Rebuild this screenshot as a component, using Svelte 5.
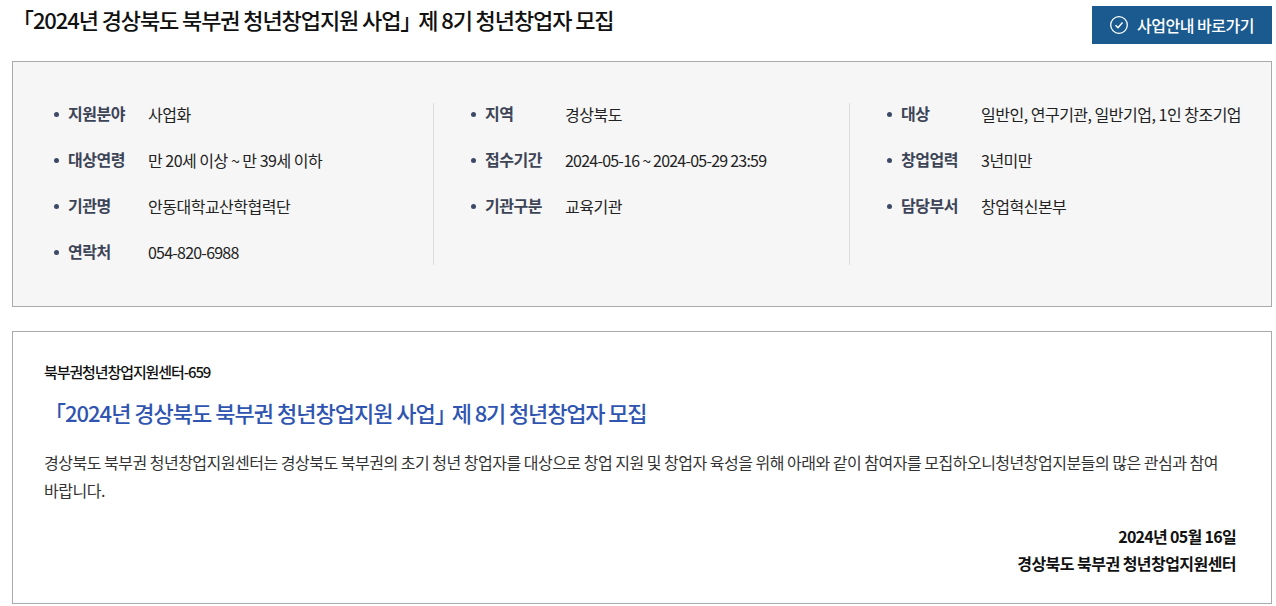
<script>
  const columns = [
    [
      ['지원분야', '사업화'],
      ['대상연령', '만 20세 이상 ~ 만 39세 이하'],
      ['기관명', '안동대학교산학협력단'],
      ['연락처', '054-820-6988']
    ],
    [
      ['지역', '경상북도'],
      ['접수기간', '2024-05-16 ~ 2024-05-29 23:59'],
      ['기관구분', '교육기관']
    ],
    [
      ['대상', '일반인, 연구기관, 일반기업, 1인 창조기업'],
      ['창업업력', '3년미만'],
      ['담당부서', '창업혁신본부']
    ]
  ];

  // values made of digits only run tighter
  const isNumeric = (v) => /^[\d\s:~-]+$/.test(v);
</script>

<main>
  <header>
    <h1>「2024년 경상북도 북부권 청년창업지원 사업」<span class="rest"> 제 8기 청년창업자 모집</span></h1>
    <button type="button">
      <svg width="18" height="18" viewBox="0 0 18 18" fill="none" stroke="#fff" stroke-width="1.3">
        <circle cx="9" cy="9" r="8.3" />
        <path d="M5.5 9.2 8 11.7 12.5 6.6" stroke-width="1.5" />
      </svg>
      사업안내 바로가기
    </button>
  </header>

  <section class="info">
    {#each columns as col}
      <ul>
        {#each col as [label, value]}
          <li>
            <span class="label">{label}</span>
            <span class="value" class:numeric={isNumeric(value)}>{value}</span>
          </li>
        {/each}
      </ul>
    {/each}
  </section>

  <section class="body">
    <p class="code">북부권청년창업지원센터-659</p>
    <h2>「2024년 경상북도 북부권 청년창업지원 사업」<span class="rest"> 제 8기 청년창업자 모집</span></h2>
    <p class="text">경상북도 북부권 청년창업지원센터는 경상북도 북부권의 초기 청년 창업자를 대상으로 창업 지원 및 창업자 육성을 위해 아래와 같이 참여자를 모집하오니청년창업지분들의 많은 관심과 참여 바랍니다.</p>
    <p class="sign"><span class="date">2024년 05월 16일</span><br />경상북도 북부권 청년창업지원센터</p>
  </section>
</main>

<style>
  :global(body) {
    background: #fff;
  }

  main {
    width: 1260px;
    margin-left: 12px;
    font-family: "Noto Sans CJK KR", "Noto Sans", sans-serif;
    color: #222;
  }

  header {
    display: flex;
    justify-content: space-between;
    align-items: flex-start;
    height: 61px;
  }

  h1 {
    margin: 0;
    padding-top: 2px;
    font-size: 22px;
    line-height: 34px;
    font-weight: 500;
    letter-spacing: -1.1px;
    color: #111;
  }

  h1 .rest {
    margin-left: -3px;
  }

  button {
    display: flex;
    align-items: center;
    justify-content: center;
    gap: 9px;
    width: 180px;
    height: 38px;
    margin-top: 6px;
    border: none;
    background: #1a5a8e;
    color: #fff;
    font: 500 16px "Noto Sans CJK KR", sans-serif;
    letter-spacing: -0.5px;
  }

  .info {
    display: grid;
    grid-template-columns: 420px 416px 1fr;
    height: 246px;
    padding: 41px 0;
    box-sizing: border-box;
    border: 1px solid #aaa;
    background: #f6f6f6;
  }

  ul {
    list-style: none;
    margin: 0;
    padding: 0 0 0 36px;
    height: 162px;
    border-left: 1px solid #ddd;
  }

  ul:first-child {
    padding-left: 40px;
    border-left: none;
  }

  li {
    display: flex;
    align-items: center;
    height: 23px;
    margin-bottom: 23px;
    font-size: 16px;
    letter-spacing: -0.5px;
    position: relative;
    padding-left: 15px;
  }

  li::before {
    content: "";
    position: absolute;
    left: 1px;
    top: 9px;
    width: 5px;
    height: 5px;
    border-radius: 50%;
    background: #3c4a66;
  }

  .label {
    width: 80px;
    flex: none;
    font-weight: 700;
    color: #3c4456;
    position: relative;
    top: -2px;
  }

  .value {
    color: #222;
    position: relative;
    top: -1px;
  }

  .value.numeric {
    letter-spacing: -0.78px;
  }

  .body {
    margin-top: 24px;
    height: 273px;
    padding: 27px 34px 0 31px;
    box-sizing: border-box;
    border: 1px solid #aaa;
  }

  .code {
    margin: 0;
    font-size: 15px;
    line-height: 26px;
    font-weight: 500;
    letter-spacing: -1.1px;
    color: #111;
  }

  h2 {
    margin: 11px 0 0;
    font-size: 22px;
    line-height: 32px;
    font-weight: 500;
    letter-spacing: -1px;
    color: #2f55b0;
  }

  h2 .rest {
    margin-left: -4px;
    letter-spacing: -1.15px;
  }

  .text {
    margin: 20px 0 0;
    font-size: 16px;
    line-height: 28px;
    letter-spacing: -0.5px;
    word-break: keep-all;
    color: #333;
  }

  .sign {
    margin: 19px 1px 0 0;
    text-align: right;
    font-size: 16px;
    line-height: 27px;
    font-weight: 700;
    letter-spacing: -0.55px;
    color: #111;
  }

  .date {
    letter-spacing: -0.7px;
  }
</style>
